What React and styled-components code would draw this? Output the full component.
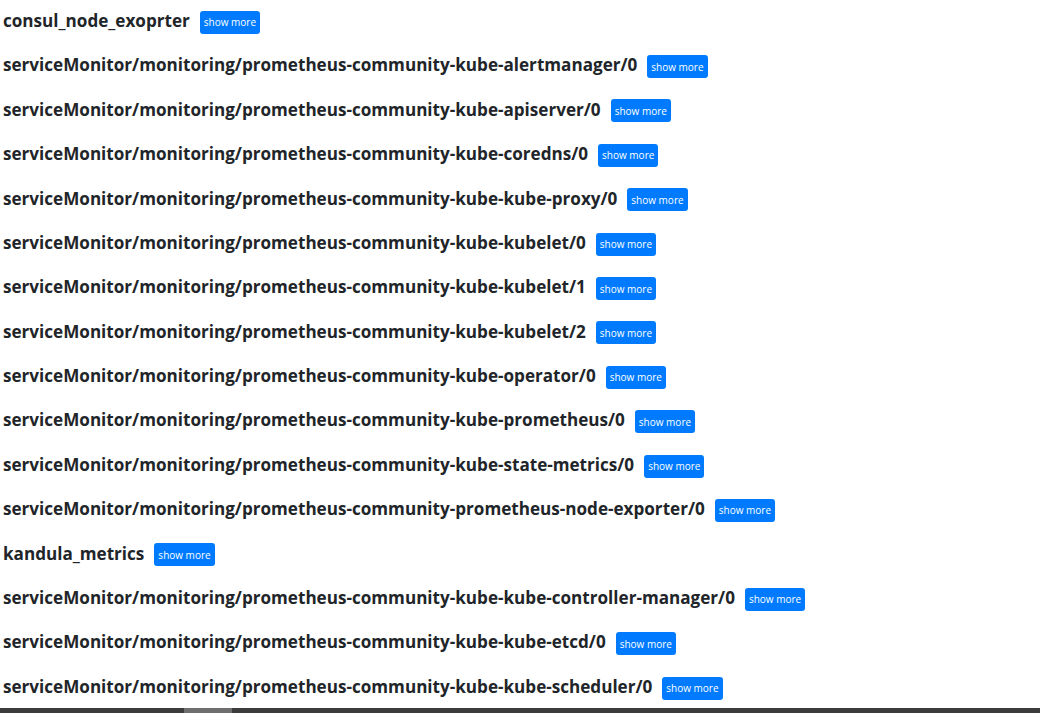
import React from "react";
import styled, { createGlobalStyle } from "styled-components";

const jobs = [
  "consul_node_exoprter",
  "serviceMonitor/monitoring/prometheus-community-kube-alertmanager/0",
  "serviceMonitor/monitoring/prometheus-community-kube-apiserver/0",
  "serviceMonitor/monitoring/prometheus-community-kube-coredns/0",
  "serviceMonitor/monitoring/prometheus-community-kube-kube-proxy/0",
  "serviceMonitor/monitoring/prometheus-community-kube-kubelet/0",
  "serviceMonitor/monitoring/prometheus-community-kube-kubelet/1",
  "serviceMonitor/monitoring/prometheus-community-kube-kubelet/2",
  "serviceMonitor/monitoring/prometheus-community-kube-operator/0",
  "serviceMonitor/monitoring/prometheus-community-kube-prometheus/0",
  "serviceMonitor/monitoring/prometheus-community-kube-state-metrics/0",
  "serviceMonitor/monitoring/prometheus-community-prometheus-node-exporter/0",
  "kandula_metrics",
  "serviceMonitor/monitoring/prometheus-community-kube-kube-controller-manager/0",
  "serviceMonitor/monitoring/prometheus-community-kube-kube-etcd/0",
  "serviceMonitor/monitoring/prometheus-community-kube-kube-scheduler/0",
];

const App = () => {
  return (
    <>
      <GlobalStyle />
      <Page>
        <List>
          {jobs.map((job) => (
            <Row key={job}>
              <Title>{job}</Title>
              <ShowMore>show more</ShowMore>
            </Row>
          ))}
        </List>
        <ScrollBar>
          <Thumb />
        </ScrollBar>
      </Page>
    </>
  );
};
export default App;

const GlobalStyle = createGlobalStyle`
  html, body {
    margin: 0;
    padding: 0;
    background: #fff;
    overflow: hidden;
  }
  body {
    font-family: "Open Sans", "Noto Sans", sans-serif;
    color: #212529;
  }
`;

const Page = styled.div`
  display: flex;
  flex-direction: column;
  height: 713px;
  width: 1040px;
`;

const List = styled.div`
  flex: 1;
  min-height: 0;
  overflow: hidden;
  display: flex;
  flex-direction: column;
  padding-left: 3px;
`;

const Row = styled.div`
  display: flex;
  align-items: center;
  gap: 10px;
  height: 44.4px;
  flex-shrink: 0;
`;

const Title = styled.h5`
  margin: 0;
  font-size: 17.1px;
  font-weight: 700;
  line-height: 1.2;
  color: #212529;
  position: relative;
  top: -1px;
`;

const ShowMore = styled.button`
  border: 0;
  border-radius: 3px;
  background-color: #007bff;
  color: #fff;
  font-family: "Open Sans", sans-serif;
  font-size: 10px;
  line-height: 1;
  height: 23px;
  padding: 0 4px;
  cursor: pointer;
`;

const ScrollBar = styled.div`
  flex-shrink: 0;
  height: 5px;
  background-color: #3c3c3c;
  display: flex;
  padding-left: 184px;
`;

const Thumb = styled.div`
  width: 48px;
  background-color: #6e6e6e;
`;
